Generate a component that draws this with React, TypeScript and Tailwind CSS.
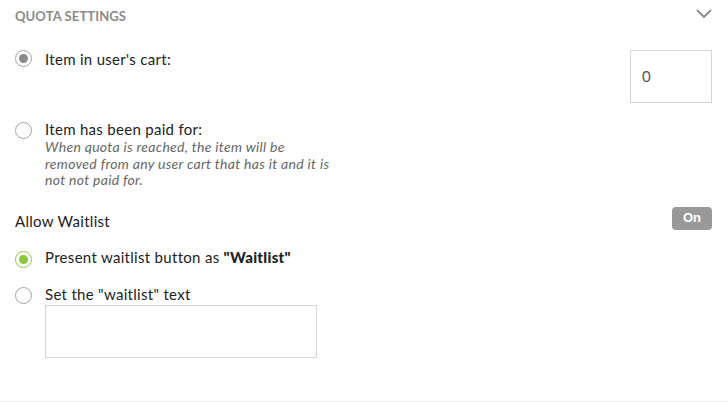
import React from 'react';

type RadioProps = { checked?: boolean; color?: 'gray' | 'green'; className?: string };

const Radio: React.FC<RadioProps> = ({ checked, color = 'gray', className = '' }) => {
  const ring = checked && color === 'green' ? 'border-[#8dc63f]' : 'border-[#a3a3a3]';
  const dot = color === 'green' ? 'bg-[#8dc63f]' : 'bg-[#8a8a8a]';
  return (
    <span className={`flex h-[17px] w-[17px] shrink-0 items-center justify-center rounded-full border-[1.5px] bg-white ${ring} ${className}`}>
      {checked && <span className={`h-[9px] w-[9px] rounded-full ${dot}`} />}
    </span>
  );
};

const App: React.FC = () => {
  return (
    <div
      className="flex h-[402px] w-[728px] flex-col border-b border-[#ececec] bg-white pl-[15px] pr-[16px] text-[#222]"
      style={{ fontFamily: 'Lato, "Open Sans", sans-serif' }}
    >
      {/* header */}
      <div className="flex h-[34px] items-start justify-between">
        <span className="mt-[9px] text-[13px] font-bold uppercase leading-[15px] tracking-[0.1px] text-[#8a8a8a]">
          Quota Settings
        </span>
        <svg className="mt-[9px]" width="16" height="9" viewBox="0 0 16 9" fill="none">
          <path d="M1 1l7 7 7-7" stroke="#8a8a8a" strokeWidth="1.8" />
        </svg>
      </div>

      {/* item in cart */}
      <div className="mt-[16px] flex items-start justify-between">
        <div className="flex items-start gap-[13px]">
          <Radio checked />
          <span className="text-[15px] leading-[18px] tracking-[0.3px]">Item in user's cart:</span>
        </div>
        <div className="flex h-[53px] w-[82px] items-center border border-[#d4d4d4] pl-[11px] text-[15px] text-[#555]">
          0
        </div>
      </div>

      {/* paid for */}
      <div className="mt-[17px] flex items-start gap-[13px]">
        <Radio className="mt-[2px]" />
        <div className="w-[288px]">
          <div className="text-[15px] leading-[18px] tracking-[0.3px]">Item has been paid for:</div>
          <div className="mt-[1px] text-[14px] italic leading-[16.5px] tracking-[0.3px] text-[#666]">
            When quota is reached, the item will be removed from any user cart that has it and it is not not paid for.
          </div>
        </div>
      </div>

      {/* allow waitlist */}
      <div className="mt-[18px] flex items-start justify-between">
        <span className="mt-[5px] text-[15px] leading-[18px] tracking-[0.3px]">Allow Waitlist</span>
        <span
          className="flex h-[23px] w-[40px] items-center justify-center rounded-[4px] bg-[#999] text-[13px] font-bold text-white"
          style={{ fontFamily: '"Liberation Sans", Arial, sans-serif' }}
        >
          On
        </span>
      </div>

      <div className="mt-[18px] flex items-start gap-[13px]">
        <Radio checked color="green" className="mt-[3px]" />
        <span className="text-[15px] leading-[18px] tracking-[0.3px]">
          Present waitlist button as <b className="font-black">"Waitlist"</b>
        </span>
      </div>

      <div className="mt-[17px] flex items-start gap-[13px]">
        <Radio className="mt-[2px]" />
        <div>
          <div className="text-[15px] leading-[18px] tracking-[0.3px]">Set the "waitlist" text</div>
          <div className="mt-[2px] h-[53px] w-[272px] border border-[#d4d4d4]" />
        </div>
      </div>
    </div>
  );
};

export default App;
